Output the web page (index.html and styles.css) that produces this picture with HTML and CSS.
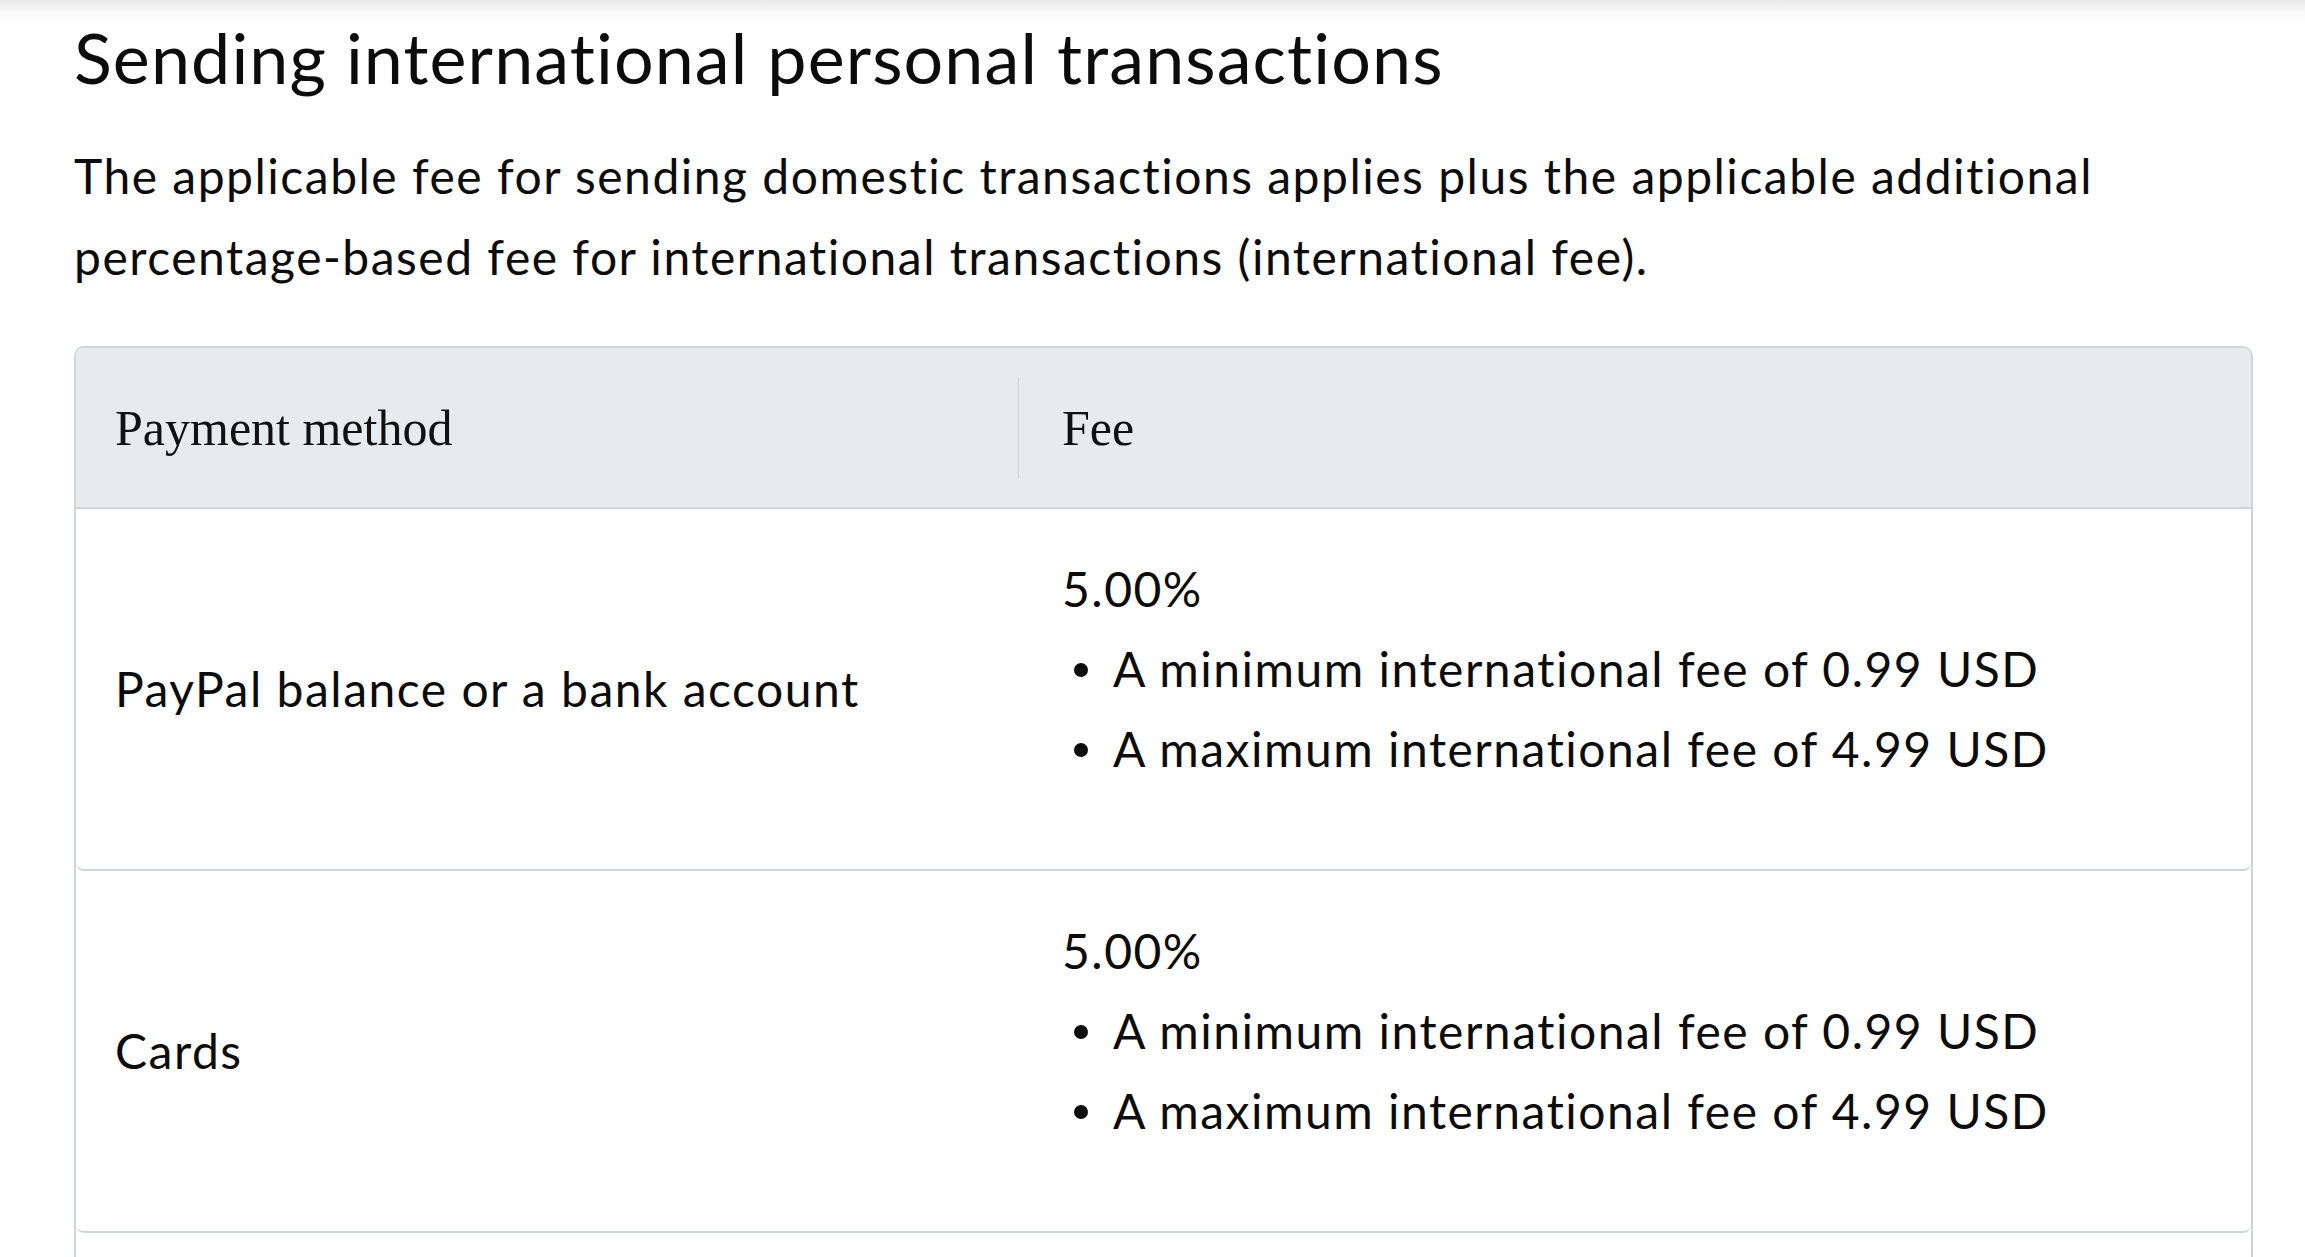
FILE: index.html
```html
<!DOCTYPE html>
<html lang="en">
<head>
<meta charset="utf-8">
<title>Sending international personal transactions</title>
<link rel="stylesheet" href="styles.css">
</head>
<body>
<main class="page">
  <h1 class="title">Sending international personal transactions</h1>
  <p class="intro">The applicable fee for sending domestic transactions applies plus the applicable additional percentage-based fee for international transactions (international fee).</p>

  <div class="fee-table">
    <div class="head">
      <div class="head-cell">Payment method</div>
      <div class="head-cell head-cell--fee"><span class="head-label">Fee</span></div>
    </div>

    <div class="row">
      <div class="cell cell--method">PayPal balance or a bank account</div>
      <div class="cell cell--fee">
        <p class="rate">5.00%</p>
        <ul class="limits">
          <li>A minimum international fee of 0.99 USD</li>
          <li>A maximum international fee of 4.99 USD</li>
        </ul>
      </div>
    </div>

    <div class="row">
      <div class="cell cell--method">Cards</div>
      <div class="cell cell--fee">
        <p class="rate">5.00%</p>
        <ul class="limits">
          <li>A minimum international fee of 0.99 USD</li>
          <li>A maximum international fee of 4.99 USD</li>
        </ul>
      </div>
    </div>

    <div class="row row--more"></div>
  </div>
</main>
</body>
</html>
```

FILE: styles.css
```css
html, body {
  margin: 0;
  padding: 0;
}

body {
  background: #ffffff linear-gradient(#e9e9e9 0px, #f7f7f7 10px, #ffffff 24px) no-repeat;
  background-size: 100% 24px;
  color: #0c0c0c;
  font-family: Lato, "Open Sans", "Liberation Sans", sans-serif;
  overflow: hidden;
}

.page {
  padding: 0 52px 0 74px;
}

.title {
  margin: 15px 0 0;
  font-size: 70px;
  font-weight: 400;
  line-height: 84px;
  letter-spacing: 1.1px;
}

.intro {
  margin: 36px 0 0;
  font-size: 48px;
  line-height: 81px;
  letter-spacing: 1.5px;
  max-width: 2100px;
}

.fee-table {
  margin-top: 49px;
  border: 2px solid #cfd5d9;
  border-bottom: none;
  border-radius: 10px 10px 0 0;
}

.head {
  display: grid;
  grid-template-columns: 942px 1fr;
  align-items: center;
  height: 159px;
  background: #e9eaec;
  border-bottom: 2px solid #cfd5d9;
  border-radius: 8px 8px 0 0;
  font-family: "Liberation Serif", "Times New Roman", serif;
  font-size: 50px;
  color: #111111;
}

.head-cell {
  padding-left: 39px;
}

.head-cell--fee {
  display: flex;
  align-items: center;
  height: 100px;
  padding-left: 43px;
  border-left: 1px solid #cdd3d7;
}

.row {
  display: grid;
  grid-template-columns: 942px 1fr;
  align-items: center;
  border-bottom: 2px solid #cfd5d9;
  border-radius: 0 0 8px 8px;
  font-size: 48px;
  line-height: 80px;
  letter-spacing: 1.5px;
}

.row--more {
  height: 120px;
  border-bottom: none;
}

.cell--method {
  padding-left: 39px;
}

.cell--fee {
  padding: 40px 0 40px 44px;
}

.rate {
  margin: 0;
}

.limits {
  list-style: none;
  margin: 0 0 40px;
  padding: 0;
}

.limits li {
  position: relative;
  padding-left: 51px;
}

.limits li::before {
  content: "";
  position: absolute;
  left: 12px;
  top: 34px;
  width: 14px;
  height: 14px;
  border-radius: 50%;
  background: #0c0c0c;
}
```
